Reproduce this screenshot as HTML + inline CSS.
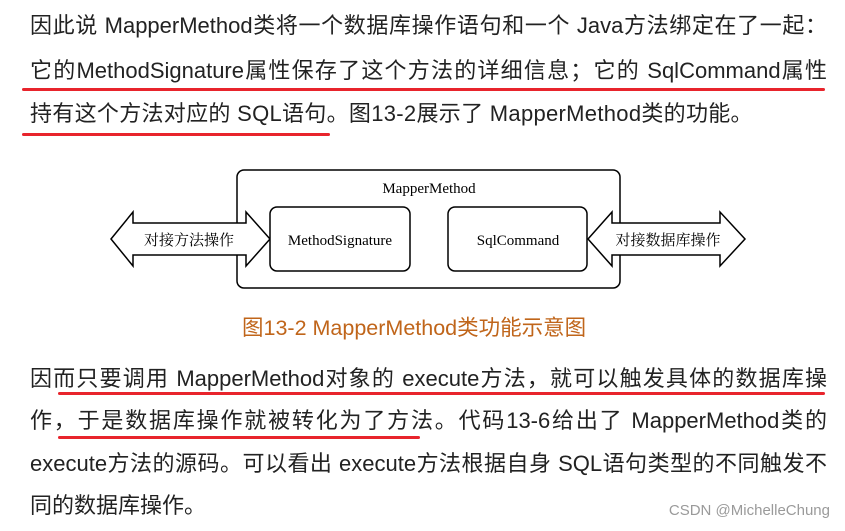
<!DOCTYPE html>
<html><head><meta charset="utf-8"><style>
body{margin:0;width:845px;height:531px;background:#fff;position:relative;overflow:hidden;font-family:"Liberation Sans","Noto Sans CJK SC",sans-serif;color:#222}
.l{position:absolute;left:30px;font-size:22px;white-space:nowrap;line-height:30px}
.j{width:797px;text-align:justify;text-align-last:justify}
.u{position:absolute;height:3px;background:#e8242c;border-radius:2px}
.wm{position:absolute;right:15px;top:502px;font-size:15px;color:#9a9a9a}
</style></head><body>
<div class="l j" style="top:11px">因此说 MapperMethod类将一个数据库操作语句和一个 Java方法绑定在了一起：</div>
<div class="l j" style="top:56px">它的MethodSignature属性保存了这个方法的详细信息；它的 SqlCommand属性</div>
<div class="l" style="top:99px;letter-spacing:0.3px">持有这个方法对应的 SQL语句。图13-2展示了 MapperMethod类的功能。</div>
<div class="u" style="left:22px;width:803px;top:88px"></div>
<div class="u" style="left:22px;width:308px;top:133px"></div>
<svg style="position:absolute;left:0;top:0" width="845" height="300">
<g fill="#fff" stroke="#000" stroke-width="1.5" font-family="Liberation Serif,Noto Serif CJK SC,serif" font-size="15">
<rect x="237" y="170" width="383" height="118" rx="7"/>
<polygon points="111,239 133,212 133,223 246,223 246,212 270,239 246,266 246,255 133,255 133,266"/>
<polygon points="588,239 612,212 612,223 720,223 720,212 745,239 720,266 720,255 612,255 612,266"/>
<rect x="270" y="207" width="140" height="64" rx="7"/>
<rect x="448" y="207" width="139" height="64" rx="7"/>
<g fill="#000" stroke="none" text-anchor="middle">
<text x="429" y="193">MapperMethod</text>
<text x="340" y="245">MethodSignature</text>
<text x="518" y="245">SqlCommand</text>
<text x="189" y="245">对接方法操作</text>
<text x="668" y="245">对接数据库操作</text>
</g></g></svg>
<div style="position:absolute;left:242px;top:311px;font-size:21.5px;color:#c0651a">图13-2 MapperMethod类功能示意图</div>
<div class="l j" style="top:364px">因而只要调用 MapperMethod对象的 execute方法，就可以触发具体的数据库操</div>
<div class="l j" style="top:406px">作，于是数据库操作就被转化为了方法。代码13-6给出了 MapperMethod类的</div>
<div class="l j" style="top:449px">execute方法的源码。可以看出 execute方法根据自身 SQL语句类型的不同触发不</div>
<div class="l" style="top:491px">同的数据库操作。</div>
<div class="u" style="left:58px;width:767px;top:392px"></div>
<div class="u" style="left:58px;width:362px;top:436px"></div>
<div class="wm">CSDN @MichelleChung</div>
</body></html>
